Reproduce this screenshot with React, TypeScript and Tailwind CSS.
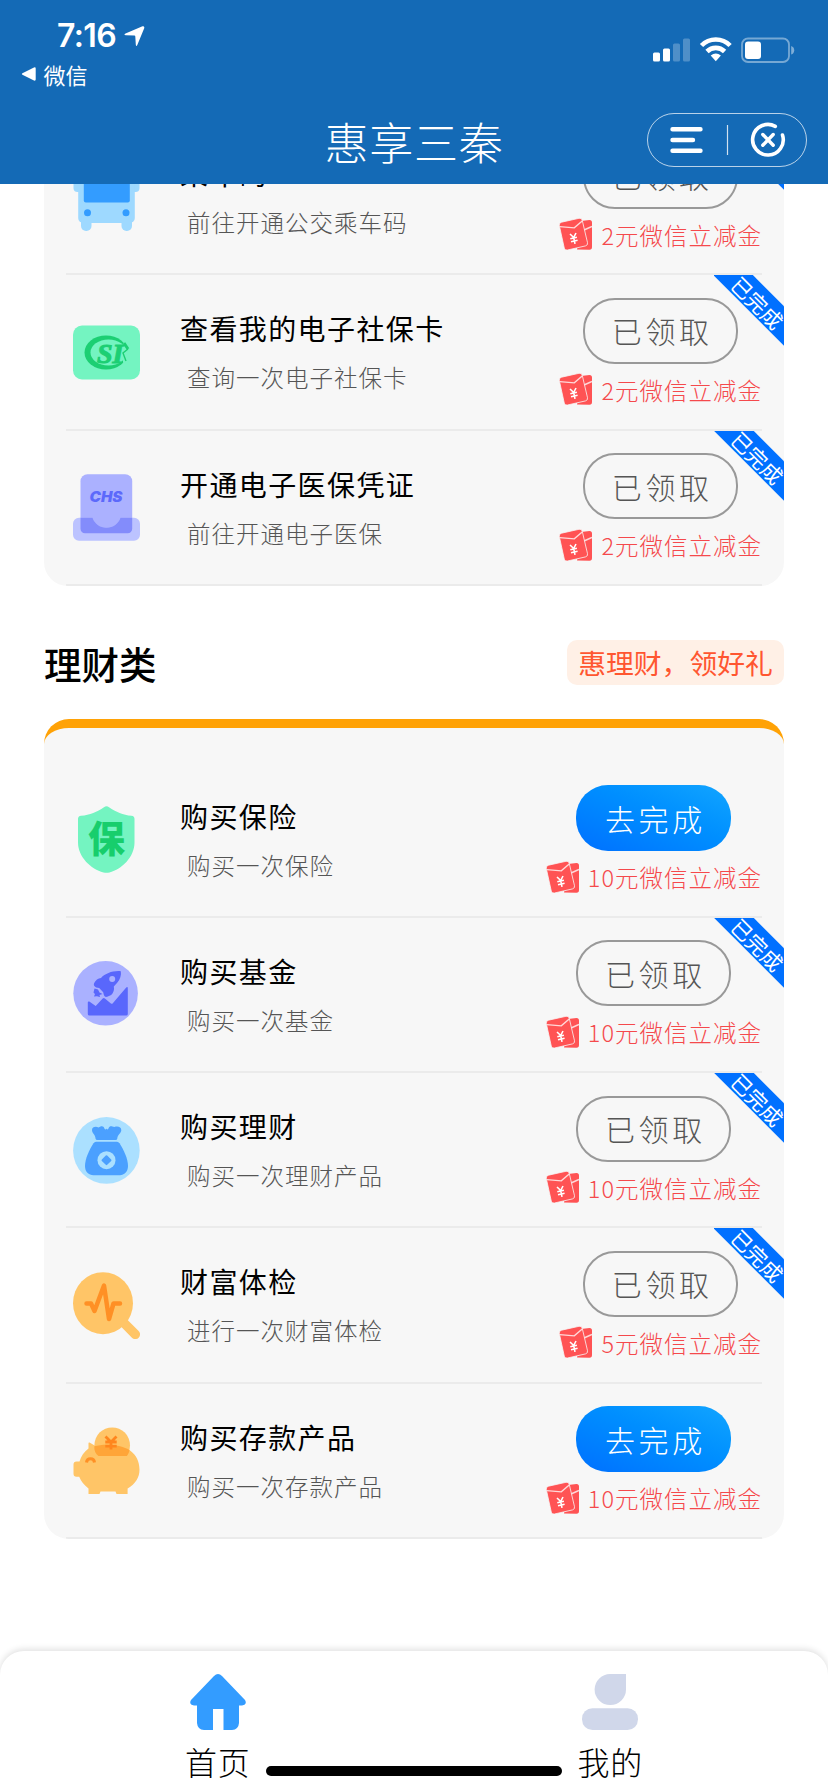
import React from 'react';

interface Task {
  id: string;
  title: string;
  description: string;
  reward: string;
  done: boolean;
  icon: React.ReactNode;
}

const BusIcon = () => (
  <svg viewBox="0 0 67 67" className="w-[67px] h-[67px]">
    <rect x="0.5" y="8" width="66" height="20" rx="4" fill="#9ed9ff" />
    <path d="M5.2 6h56.6v48a5 5 0 0 1-5 5H10.2a5 5 0 0 1-5-5z" fill="#9ed9ff" />
    <rect x="8" y="50" width="10.5" height="17" rx="5" fill="#9ed9ff" />
    <rect x="48.5" y="50" width="10.5" height="17" rx="5" fill="#9ed9ff" />
    <rect x="10.8" y="8" width="46" height="30.5" rx="2" fill="#339cff" />
    <circle cx="14.5" cy="48.8" r="3.5" fill="#339cff" />
    <circle cx="53" cy="48.8" r="3.5" fill="#339cff" />
  </svg>
);

const SocialCardIcon = () => (
  <svg viewBox="0 0 67 67" className="w-[67px] h-[67px]">
    <rect x="0" y="6.5" width="67" height="54" rx="9" fill="#74f4c1" />
    <ellipse cx="33" cy="33.5" rx="21.5" ry="17" fill="#1ccf73" />
    <ellipse cx="35.5" cy="33.5" rx="18" ry="13" fill="#74f4c1" />
    <path d="M50 24l8 3v14l-8 3z" fill="#74f4c1" />
    <text x="24" y="43.5" fontSize="28" fontWeight="700" fontStyle="italic" fontFamily="Liberation Serif, serif" fill="#1ccf73" stroke="#1ccf73">SI</text>
    <path d="M55 30l-5 4 3 8" fill="none" stroke="#1ccf73" strokeWidth="1.4" />
    <path d="M51 24l4 6" fill="none" stroke="#1ccf73" strokeWidth="3" />
  </svg>
);

const MedicalIcon = () => (
  <svg viewBox="0 0 67 67" className="w-[67px] h-[67px]">
    <rect x="7.5" y="0.3" width="51.7" height="59.5" rx="7" fill="#abb1ff" />
    <path d="M6 43.7h13.5c2 6 7.500 10 14 10s12-4 14-10H61a6 6 0 0 1 6 6v11a6 6 0 0 1-6 6H6a6 6 0 0 1-6-6v-11a6 6 0 0 1 6-6z" fill="#bcc3ff" />
    <path d="M7.500 43.7h12c2 6 7.500 10 14 10s12-4 14-10h11.700v11a4.500 4.500 0 0 1-4.500 4.500H12a4.500 4.500 0 0 1-4.500-4.500z" fill="#838cfb" />
    <text x="16.5" y="27.5" fontSize="14.5" fontWeight="900" fontStyle="italic" fontFamily="Inter, sans-serif" textLength="33" lengthAdjust="spacingAndGlyphs" fill="#5c69fb">CHS</text>
  </svg>
);

const ShieldIcon = () => (
  <svg viewBox="0 0 67 67" className="w-[67px] h-[67px]">
    <path d="M31 1.200q2.500-1.800 5 0C43 6 50 9 58.500 9.800q3 .4 3 3.200v23.500C61.500 51 49 63 36.500 66.500q-3 .6-6 0C18 63 5 51 5 36.500V13q0-2.800 3-3.200C17 9 24 6 31 1.200z" fill="#74f4c1" />
    <text x="33.6" y="46.500" textAnchor="middle" fontSize="37" fontWeight="900" fontFamily="'Noto Sans CJK SC', sans-serif" fill="#17ce6c">保</text>
  </svg>
);

const FundIcon = () => (
  <svg viewBox="0 0 67 67" className="w-[67px] h-[67px]">
    <circle cx="32.600" cy="32.300" r="32.300" fill="#aab1ff" />
    <path d="M14.800 41.500q0-1.500 1.500-1l6.400 4.500 7-7.500q1-1 2.200 0l6 5q1 .8 1.900-.2l13-15.300q2-2 2 .5v25.500q0 1.600-1.600 1.600H16.400q-1.600 0-1.600-1.600z" fill="#5967fc" />
    <path d="M47.800 10.200c.8 4-.8 8.300-3.600 11.600l-3.400 3.800c.8 3-.3 6.500-2.600 8.400l-4 1.800c-2 .4-3-.5-3.400-2l-.6-2.600-4-4.200-3-.6c-2.200-.8-2.900-2.500-2-4.300 1.200-3 4-4.800 6.800-5.200C32.500 12.500 39.500 9.500 47.800 10.200z" fill="#5967fc" />
    <circle cx="39.200" cy="18" r="3" fill="#aab1ff" />
    <path d="M21.500 27.500l3.500 1 1.500 3 3 1.500-3 1 .5 2-3-.8-3 .3 1-2.500-1.500-1.500z" fill="#5967fc" />
  </svg>
);

const MoneyBagIcon = () => (
  <svg viewBox="0 0 67 67" className="w-[67px] h-[67px]">
    <circle cx="33.400" cy="33.400" r="33.300" fill="#abe0ff" />
    <path d="M22.500 21.500c0-4-3.500-5-3.500-8.500 0-3 3.500-3.800 6.500-2.600l2-.8c2-.8 3.200 0 3.700 1.400.5 1.500 1.500 2 2.200.5.7 1.500 1.800 1 2.300-.5.500-1.500 2-2 3.700-1.400l2 .4c3.500-1.200 7 0 6.900 3.200-.1 3-3.800 4.500-4 8.300q-.2 1.500-1.800 1.500H24.500q-1.800 0-2-1.500z" fill="#4ba0ff" />
    <path d="M23 24.800h21q1.500 0 2.500 1.500C51 33.500 55 42 55 49c0 6-4 9.200-8 9.200H20.500c-5 0-8.500-3.200-8.500-9.200 0-7 4-15.500 8.500-22.700q1-1.500 2.500-1.500z" fill="#4ba0ff" />
    <circle cx="33.500" cy="43.200" r="9" fill="#abe0ff" />
    <rect x="29.700" y="39.400" width="7.600" height="7.600" rx="1" transform="rotate(45 33.500 43.200)" fill="#4ba0ff" />
  </svg>
);

const HealthCheckIcon = () => (
  <svg viewBox="0 0 67 67" className="w-[67px] h-[67px]">
    <path d="M50 50l12.300 12.300" stroke="#ffc567" strokeWidth="9.500" strokeLinecap="round" />
    <ellipse cx="30" cy="31.200" rx="30" ry="31" fill="#ffc567" />
    <path d="M13.500 31.500h4.500l3.500 7.500L31 13.500l5 33.500 4.500-15.500H47" fill="none" stroke="#ff9025" strokeWidth="4.500" strokeLinecap="round" strokeLinejoin="round" />
  </svg>
);

const PiggyIcon = () => (
  <svg viewBox="0 0 67 67" className="w-[67px] h-[67px]">
    <circle cx="39.200" cy="18.200" r="17.800" fill="#ffc567" />
    <path d="M15.500 16.200q0-1 1-.6l6 3.400c4-1.200 8-1.500 13-1.500 18 0 31 9 31 25 0 8-4 14.500-11.900 19v5.500H43.500l-1-2.500h-15l-1 2.500h-11v-5.500C11 58 8 54 6.200 49.700H3.500q-3 0-3-3V37.500q0-3 3-3h3C8 29 11 25 15.500 21.500z" fill="#ffc567" />
    <path d="M21.300 19.200c9-2.600 25.500-2.300 35.200 3.800-.4 2.500-1.300 4.200-2.700 6H25.500c-3-2-4.500-5.500-4.200-9.800z" fill="#ffa538" />
    <path d="M32.500 9.500l5.500 5.500 5.500-5.500M38 15v7.500M32.300 15h11.400M32.300 19.200h11.400" fill="none" stroke="#ff861d" strokeWidth="2.800" />
    <path d="M13.500 35.500c.5-5 7.500-5 8 0" fill="none" stroke="#ff9025" strokeWidth="3" />
  </svg>
);

const RedPacket = () => (
  <svg viewBox="0 0 33 33" className="w-[33px] h-[33px] shrink-0">
    <path d="M22 3l8.500-1q2.500 0 2.500 2.500V29q0 2.700-2.500 2.700L18 31.500z" fill="#ff5354" />
    <path d="M25 12l8-3.500" stroke="#ffd9d9" strokeWidth="1.600" />
    <path d="M2.500 4.200L20 .3q2.500-.6 3.200 1.800l5.300 22.600q.5 2.500-2 3.200L8.500 32q-2.500.5-3.200-1.800L.3 7.500q-.5-2.600 2.200-3.300z" fill="#ff5354" stroke="#f7f7f7" strokeWidth=".8" />
    <path d="M.8 8.600l14.500 1.300L23.800 2.500" fill="none" stroke="#ffd9d9" strokeWidth="1.400" />
    <path d="M11 16l3.700 3.500 2.300-4.500M14.700 19.500l1.300 6.300M11.300 20.800l6.600-1.500M12 23.800l6.600-1.500" fill="none" stroke="#fff" strokeWidth="1.600" />
  </svg>
);

const lifeTasks: Task[] = [
  { id: 'bus', title: '乘车码', description: '前往开通公交乘车码', reward: '2元微信立减金', done: true, icon: <BusIcon /> },
  { id: 'social', title: '查看我的电子社保卡', description: '查询一次电子社保卡', reward: '2元微信立减金', done: true, icon: <SocialCardIcon /> },
  { id: 'medical', title: '开通电子医保凭证', description: '前往开通电子医保', reward: '2元微信立减金', done: true, icon: <MedicalIcon /> },
];

const financeTasks: Task[] = [
  { id: 'insurance', title: '购买保险', description: '购买一次保险', reward: '10元微信立减金', done: false, icon: <ShieldIcon /> },
  { id: 'fund', title: '购买基金', description: '购买一次基金', reward: '10元微信立减金', done: true, icon: <FundIcon /> },
  { id: 'wealth', title: '购买理财', description: '购买一次理财产品', reward: '10元微信立减金', done: true, icon: <MoneyBagIcon /> },
  { id: 'check', title: '财富体检', description: '进行一次财富体检', reward: '5元微信立减金', done: true, icon: <HealthCheckIcon /> },
  { id: 'deposit', title: '购买存款产品', description: '购买一次存款产品', reward: '10元微信立减金', done: false, icon: <PiggyIcon /> },
];

const TaskRow: React.FC<{ task: Task }> = ({ task }) => (
  <div className="relative h-[155.25px] px-[22px]">
    <div className="flex h-full border-b-2 border-[#ebebeb] pl-[6.5px]">
      <div className="pt-[43.5px]">{task.icon}</div>
      <div className="flex-1 pl-[40.5px] pt-[33px]">
        <h3 className="text-[28px] leading-[40px] tracking-[1.4px] text-black">{task.title}</h3>
        <p className="mt-[12px] pl-[7px] text-[23.5px] leading-[34px] tracking-[1px] font-light text-[#555]">{task.description}</p>
      </div>
      <div className="flex flex-col items-center pt-[22.5px]">
        {task.done ? (
          <button className="w-[155px] h-[66px] rounded-[32px] border-2 border-[#999] pl-[3px] text-[30px] font-light tracking-[3.6px] text-[#555]">
            已领取
          </button>
        ) : (
          <button className="w-[155px] h-[66px] rounded-[32px] bg-linear-to-tr from-[#0070ff] to-[#13a5ff] pl-[3px] text-[30px] font-light tracking-[3.6px] text-white">
            去完成
          </button>
        )}
        <div className="mt-[9px] flex items-center gap-[9px]">
          <RedPacket />
          <span className="text-[23.5px] leading-[34px] tracking-[1px] font-light text-[#f5494c]">{task.reward}</span>
        </div>
      </div>
    </div>
    {task.done && (
      <div className="absolute right-0 top-0 w-[70.5px] h-[70.5px] overflow-hidden">
        <div className="absolute left-[-14.900px] top-[11.400px] flex w-[120px] h-[28px] rotate-45 items-end justify-center bg-[#0070ff] pb-[0px] text-[21px] leading-[23px] text-white">
          已完成
        </div>
      </div>
    )}
  </div>
);

const StatusBar = () => (
  <div className="flex h-[97px] justify-between">
    <div className="pt-[17px]">
      <div className="flex items-center pl-[57px]">
        <span className="font-[Inter] text-[32px] leading-[38px] font-semibold tracking-[-0.6px]">7:16</span>
        <svg viewBox="0 0 21 21" className="ml-[8px] w-[21px] h-[21px]" fill="#fff">
          <path d="M18.500.3q2.300-.3 1.700 2L13.300 19q-1 2.300-1.500-.2L11.300 10.500q0-1-1-1L2 9.200Q-.8 9 1.500 7.500z" />
        </svg>
      </div>
      <div className="mt-[3px] flex items-center pl-[21px]">
        <svg viewBox="0 0 16 16" className="w-[16px] h-[16px]" fill="#fff">
          <path d="M1.400 7.200L13 1.500q1.700-.6 1.700 1v11q0 1.600-1.700 1L1.400 8.800q-1.200-.8 0-1.600z" />
        </svg>
        <span className="ml-[6.5px] text-[22px] leading-[32px]">微信</span>
      </div>
    </div>
    <svg viewBox="0 0 144 28" className="mr-[32px] mt-[35.500px] w-[144px] h-[28px]" fill="#fff">
      <rect x="1" y="16.500" width="7" height="9" rx="1.500" />
      <rect x="11" y="12.500" width="7" height="13" rx="1.500" />
      <rect x="21" y="7.500" width="7" height="18" rx="1.500" opacity=".25" />
      <rect x="31" y="2.500" width="7" height="23" rx="1.500" opacity=".25" />
      <path d="M49.500 9.500a20 20 0 0 1 28.600 0M55 15.500a12.500 12.500 0 0 1 17.600 0" fill="none" stroke="#fff" strokeWidth="4.600" />
      <path d="M58.700 19.500q5.100-3.800 10.200 0L63.800 25.300z" />
      <rect x="90" y="2.500" width="47" height="23.500" rx="6" fill="none" stroke="#fff" strokeWidth="1.800" opacity=".42" />
      <path d="M139.200 10q3 1 3 4.300t-3 4.300z" opacity=".45" />
      <rect x="93" y="5.500" width="16" height="17.500" rx="3" />
    </svg>
  </div>
);

const NavBar = () => (
  <div className="relative flex h-[87px] items-center justify-center">
    <h1 className="text-[44px] leading-[60px] font-light tracking-[0.7px]">惠享三秦</h1>
    <div className="absolute right-[21px] top-[16px] flex w-[160px] h-[54px] items-center rounded-full border border-white/70">
      <svg viewBox="0 0 158 52" className="w-[158px] h-[52px]" fill="none" stroke="#fff">
        <path d="M24.500 15.300h28M24.500 26h20.500M24.500 36.700h28" strokeWidth="4.400" strokeLinecap="round" />
        <path d="M79.500 11v30" strokeWidth="1.200" opacity=".8" />
        <path d="M127.300 12.300A15.300 15.300 0 1 0 134.500 21" strokeWidth="3.600" strokeLinecap="round" />
        <path d="M114.800 20.500l10.400 10.800M125.200 20.500L114.800 31.300" strokeWidth="3.400" strokeLinecap="round" />
      </svg>
    </div>
  </div>
);

const TabBar = () => (
  <nav className="relative flex h-[141px] shrink-0 justify-between rounded-t-[24px] bg-white px-[185px] pt-[22.5px] shadow-[0_-2px_6px_rgba(0,0,0,0.12)]">
    <a className="flex flex-col items-center">
      <svg viewBox="0 0 56 56" className="w-[56px] h-[56px]" fill="#339cff">
        <path d="M24 2q4-4 8 0L55 26q2.500 4.500-3 5.500H49V49q-.5 6.500-7 7h-8.500V35h-10.500V56H14q-6.500-.5-7-7V31.500H4q-5.500-1-3-5.500z" />
      </svg>
      <span className="mt-[8px] text-[32px] leading-[46px] font-light tracking-[0.8px]">首页</span>
    </a>
    <a className="flex flex-col items-center">
      <svg viewBox="0 0 56 56" className="w-[56px] h-[56px]" fill="#d0d7ea">
        <path d="M28.500 0H44v15.500a15.700 15.500 0 1 1-15.500-15.500z" />
        <rect x="0" y="34.200" width="56" height="21.800" rx="10.500" />
      </svg>
      <span className="mt-[8px] text-[32px] leading-[46px] font-light tracking-[0.8px]">我的</span>
    </a>
    <div className="absolute left-[266px] top-[115px] w-[296px] h-[10px] rounded-full bg-black" />
  </nav>
);

const App: React.FC = () => {
  return (
    <div className="flex w-[828px] h-[1792px] flex-col overflow-hidden bg-white font-['Noto_Sans_CJK_SC',sans-serif] text-black">
      <header className="h-[184px] shrink-0 bg-[#146ab6] text-white">
        <StatusBar />
        <NavBar />
      </header>

      <main className="flex-1 overflow-hidden px-[44px]">
        {/* list is scrolled under the header */}
        <section className="-mt-[64px] overflow-hidden rounded-[24px] bg-[#f7f7f7]">
          {lifeTasks.map(task => (
            <TaskRow key={task.id} task={task} />
          ))}
        </section>

        <div className="mt-[54.250px] flex h-[45px] items-center justify-between">
          <h2 className="text-[37.5px] font-medium leading-[45px]">理财类</h2>
          <span className="flex h-[45px] w-[217px] items-center justify-center rounded-[10px] bg-[#fff0e6] text-[27.800px] leading-[45px] text-[#ff5630]">
            惠理财，领好礼
          </span>
        </div>

        <section className="mt-[34px] overflow-hidden rounded-[25px] border-t-[9px] border-[#ffa206] bg-[#f7f7f7] pt-[34.500px]">
          {financeTasks.map(task => (
            <TaskRow key={task.id} task={task} />
          ))}
        </section>
      </main>

      <TabBar />
    </div>
  );
};

export default App;
